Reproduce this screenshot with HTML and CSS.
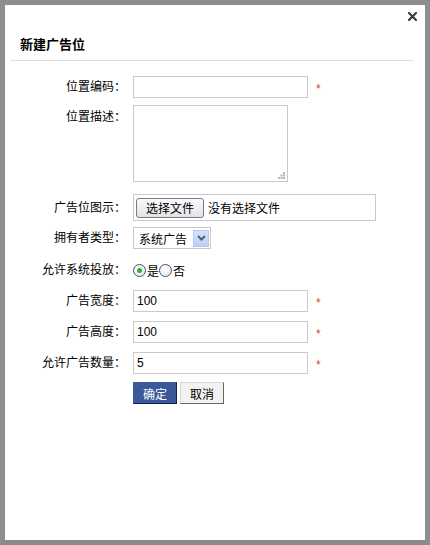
FILE: index.html
```html
<!DOCTYPE html>
<html lang="zh-CN">
<head>
<meta charset="utf-8">
<title>新建广告位</title>
<link rel="stylesheet" href="styles.css">
</head>
<body>
<div class="dialog">
  <div class="dialog-top">
    <span class="close" title="关闭">
      <svg width="9" height="9" viewBox="0 0 9 9"><path d="M1 1L8 8M8 1L1 8" stroke="#3c3c3c" stroke-width="2.2" stroke-linecap="square"/></svg>
    </span>
  </div>
  <h2 class="dialog-title">新建广告位</h2>
  <form class="form">
    <div class="row row-code">
      <label class="lbl">位置编码：</label>
      <div class="field"><span class="input w-long"></span><span class="req">*</span></div>
    </div>
    <div class="row row-desc">
      <label class="lbl lbl-top">位置描述：</label>
      <div class="field">
        <span class="textarea">
          <svg class="grip" width="7" height="7" viewBox="0 0 7 7" fill="#b8b8a8"><rect x="5" y="0" width="2" height="2"/><rect x="2.5" y="2.5" width="2" height="2"/><rect x="5" y="2.5" width="2" height="2"/><rect x="0" y="5" width="2" height="2"/><rect x="2.5" y="5" width="2" height="2"/><rect x="5" y="5" width="2" height="2"/></svg>
        </span>
      </div>
    </div>
    <div class="row row-file">
      <label class="lbl">广告位图示：</label>
      <div class="field">
        <span class="filebox"><span class="filebtn">选择文件</span><span class="filename">没有选择文件</span></span>
      </div>
    </div>
    <div class="row row-select">
      <label class="lbl">拥有者类型：</label>
      <div class="field">
        <span class="select"><span class="select-text">系统广告</span><span class="select-arrow"><svg width="9" height="6" viewBox="0 0 9 6"><path d="M1 1l3.5 3.5L8 1" fill="none" stroke="#4d6185" stroke-width="2"/></svg></span></span>
      </div>
    </div>
    <div class="row row-radio">
      <label class="lbl">允许系统投放：</label>
      <div class="field">
        <span class="radio checked"></span><span class="radio-text">是</span><span class="radio"></span><span class="radio-text">否</span>
      </div>
    </div>
    <div class="row row-num">
      <label class="lbl">广告宽度：</label>
      <div class="field"><span class="input w-long">100</span><span class="req">*</span></div>
    </div>
    <div class="row row-num">
      <label class="lbl">广告高度：</label>
      <div class="field"><span class="input w-long">100</span><span class="req">*</span></div>
    </div>
    <div class="row row-num">
      <label class="lbl">允许广告数量：</label>
      <div class="field"><span class="input w-long">5</span><span class="req">*</span></div>
    </div>
    <div class="row row-actions">
      <span class="lbl"></span>
      <div class="field">
        <span class="btn btn-primary">确定</span><span class="btn btn-default">取消</span>
      </div>
    </div>
  </form>
</div>
</body>
</html>
```
FILE: styles.css
```css
html, body {
  margin: 0;
  padding: 0;
  background: #8e8e8e;
}

body {
  font-family: "Liberation Sans", "Noto Sans CJK SC", sans-serif;
  font-size: 12px;
  color: #000;
}

.dialog {
  box-sizing: border-box;
  width: 430px;
  height: 545px;
  border: 5px solid #8e8e8e;
  border-bottom-color: #8a8a8a;
  background: #fff;
  box-shadow: 0 0 0 1px #6e6e6e;
}

.dialog-top {
  display: flex;
  justify-content: flex-end;
  height: 26px;
  padding-right: 8px;
}

.close {
  display: flex;
  margin-top: 7px;
}

.dialog-title {
  margin: 0 12px 0 5px;
  padding: 7px 0 8px 10px;
  height: 14px;
  line-height: 14px;
  font-size: 13px;
  font-weight: bold;
  border-bottom: 1px solid #dcdcdc;
}

.form {
  display: flex;
  flex-direction: column;
  padding-top: 15px;
}

.row {
  display: flex;
  align-items: center;
}

/* label column: right-aligned captions ending just before the fields */
.lbl {
  flex: 0 0 121px;
  text-align: right;
  line-height: 14px;
  white-space: nowrap;
  margin-right: 7px;
}

.lbl-top {
  align-self: flex-start;
  padding-top: 5px;
}

.field {
  display: flex;
  align-items: center;
}

.input {
  box-sizing: border-box;
  display: flex;
  align-items: center;
  height: 22px;
  border: 1px solid #c9c9c9;
  padding-left: 3px;
  font-size: 12px;
}

.w-long { width: 175px; }

.req {
  color: #e0401e;
  margin-left: 8px;
  font-size: 12px;
  line-height: 12px;
  padding-top: 3px;
}

.row-desc { margin-top: 7px; }

.textarea {
  position: relative;
  display: block;
  box-sizing: border-box;
  width: 155px;
  height: 77px;
  border: 1px solid #c9c9c9;
}

.grip {
  position: absolute;
  right: 2px;
  bottom: 2px;
}

.row-file { margin-top: 12px; }

.filebox {
  box-sizing: border-box;
  display: flex;
  align-items: center;
  width: 243px;
  height: 27px;
  border: 1px solid #c9c9c9;
  padding-left: 2px;
}

.filebtn {
  box-sizing: border-box;
  height: 20px;
  padding: 0 9px;
  display: flex;
  align-items: center;
  border: 1px solid #6e7d93;
  border-radius: 3px;
  background: linear-gradient(#fafafa, #e4e4e4);
  font-size: 12px;
}

.filename {
  margin-left: 4px;
}

.row-select { margin-top: 6px; }

.select {
  box-sizing: border-box;
  display: flex;
  align-items: center;
  width: 78px;
  height: 22px;
  border: 1px solid #c9c9c9;
  padding: 0 1px 0 5px;
}

.select-text {
  flex: 1;
}

.select-arrow {
  box-sizing: border-box;
  width: 16px;
  height: 17px;
  display: flex;
  align-items: center;
  justify-content: center;
  background: linear-gradient(#d6e2fb, #bccff5);
  border: 1px solid #b5c7ee;
}

.row-radio {
  margin-top: 12px;
  height: 18px;
}

.radio {
  box-sizing: border-box;
  display: inline-flex;
  align-items: center;
  justify-content: center;
  width: 13px;
  height: 13px;
  border: 1px solid #3c5478;
  border-radius: 50%;
  background: radial-gradient(circle at 40% 40%, #fff, #e2e6ec);
}

.radio.checked::after {
  content: "";
  width: 5px;
  height: 5px;
  border-radius: 50%;
  background: #2fb52a;
}

.radio-text {
  margin: 0 0 0 1px;
}

.row-num { margin-top: 9px; }
.row-radio + .row-num { margin-top: 11px; }

.row-actions { margin-top: 8px; }

.btn {
  box-sizing: border-box;
  display: flex;
  align-items: center;
  justify-content: center;
  width: 44px;
  height: 22px;
  font-size: 12px;
}

.btn-primary {
  background: #3b5998;
  color: #fff;
  border: 1px solid #3b5998;
  border-right-color: #0e1f5a;
  border-bottom-color: #0e1f5a;
}

.btn-default {
  margin-left: 3px;
  background: #f2f2f2;
  color: #000;
  border: 1px solid #d8d8d8;
  border-right-color: #666;
  border-bottom-color: #666;
}
```
